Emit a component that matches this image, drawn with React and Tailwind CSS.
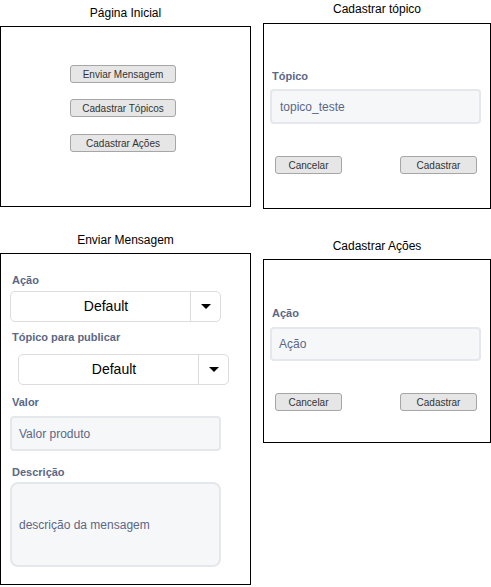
import React from "react";

const Btn = ({ children, className = "" }) => (
  <div
    className={`flex items-center justify-center h-[18px] rounded-[3px] border border-[#a6a6a6] bg-[#e6e6e6] text-[10px] text-[#333] ${className}`}
  >
    {children}
  </div>
);

const Label = ({ children, className = "" }) => (
  <div className={`text-[11px] font-bold text-[#5b6785] leading-[13px] ${className}`}>{children}</div>
);

const Input = ({ children, className = "" }) => (
  <div
    className={`flex items-center rounded-[4px] border-2 border-[#e4e7eb] bg-[#f6f7f9] text-[12px] text-[#5b6785] ${className}`}
  >
    {children}
  </div>
);

const Select = ({ className = "" }) => (
  <div className={`flex h-[31px] w-[211px] rounded-[5px] border border-[#dcdcdc] bg-white ${className}`}>
    <div className="flex flex-1 items-center justify-center pl-[11px] text-[14px] text-black">Default</div>
    <div className="flex w-[30px] items-center justify-center border-l border-[#dcdcdc]">
      <svg width="10" height="6" viewBox="0 0 10 6">
        <path d="M0 0 L10 0 L5 5 Z" fill="#000" />
      </svg>
    </div>
  </div>
);

const Title = ({ children, className = "" }) => (
  <div className={`text-center text-[12px] text-black leading-[14px] ${className}`}>{children}</div>
);

export default function App() {
  return (
    <div
      className="flex h-[587px] w-[491px] bg-white"
      style={{ fontFamily: '"Liberation Sans", Arial, sans-serif' }}
    >
      {/* Left column */}
      <div className="flex w-[251px] flex-col">
        <Title className="mt-[6px] h-[20px]">Página Inicial</Title>
        <div className="flex h-[181px] flex-col border border-black">
          <Btn className="ml-[69px] mt-[38px] w-[106px]">Enviar Mensagem</Btn>
          <Btn className="ml-[69px] mt-[16px] w-[106px]">Cadastrar Tópicos</Btn>
          <Btn className="ml-[69px] mt-[17px] w-[106px]">Cadastrar Ações</Btn>
        </div>
        <Title className="mt-[26px] h-[20px]">Enviar Mensagem</Title>
        <div className="flex h-[332px] flex-col border border-black">
          <Label className="ml-[11px] mt-[20px]">Ação</Label>
          <Select className="ml-[9px] mt-[4px]" />
          <Label className="ml-[11px] mt-[9px]">Tópico para publicar</Label>
          <Select className="ml-[17px] mt-[10px] h-[30px]" />
          <Label className="ml-[11px] mt-[11px]">Valor</Label>
          <Input className="ml-[9px] mt-[7px] h-[35px] w-[211px] pl-[7px]">Valor produto</Input>
          <Label className="ml-[11px] mt-[15px]">Descrição</Label>
          <Input className="ml-[9px] mt-[3px] h-[85px] w-[211px] rounded-[8px] pl-[7px]">descrição da mensagem</Input>
        </div>
      </div>

      {/* Right column */}
      <div className="ml-[12px] flex w-[228px] flex-col">
        <Title className="mt-[2px] h-[21px]">Cadastrar tópico</Title>
        <div className="flex h-[186px] flex-col border border-black">
          <Label className="ml-[8px] mt-[46px]">Tópico</Label>
          <Input className="ml-[6px] mt-[6px] h-[35px] w-[211px] pl-[8px]">topico_teste</Input>
          <div className="mt-[32px] flex">
            <Btn className="ml-[11px] w-[67px]">Cancelar</Btn>
            <Btn className="ml-[58px] w-[77px]">Cadastrar</Btn>
          </div>
        </div>
        <Title className="mt-[30px] h-[20px]">Cadastrar Ações</Title>
        <div className="flex h-[184px] flex-col border border-black">
          <Label className="ml-[8px] mt-[47px]">Ação</Label>
          <Input className="ml-[6px] mt-[7px] h-[34px] w-[211px] pl-[7px]">Ação</Input>
          <div className="mt-[32px] flex">
            <Btn className="ml-[11px] w-[67px]">Cancelar</Btn>
            <Btn className="ml-[58px] w-[77px]">Cadastrar</Btn>
          </div>
        </div>
      </div>
    </div>
  );
}
